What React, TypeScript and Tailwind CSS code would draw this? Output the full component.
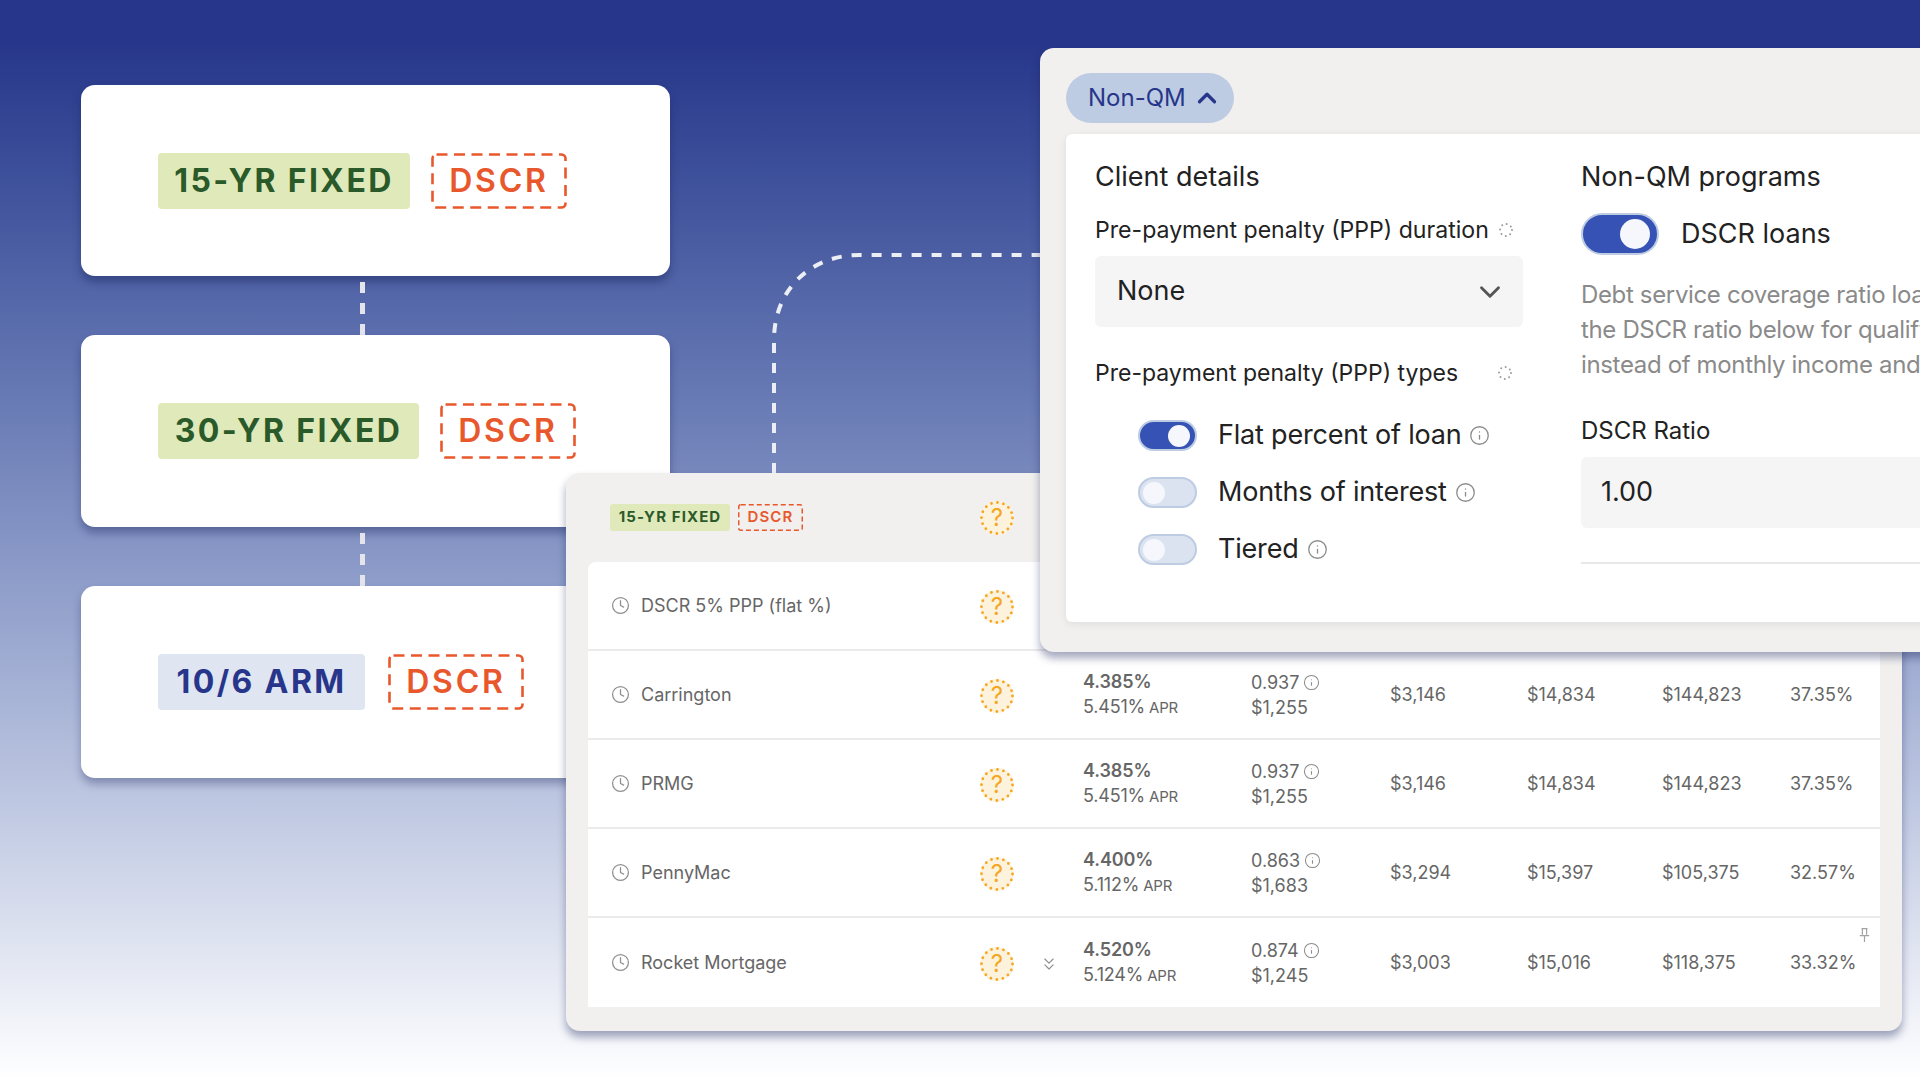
import React from "react";
import { ChevronDown, ChevronUp, ChevronsDown, Clock, Info } from "lucide-react";

const HelpBadge = () => (
  <div className="relative flex h-[34px] w-[34px] shrink-0 items-center justify-center rounded-full bg-[#fdf3dc] text-[24px] text-[#f5a623]">
    <svg className="absolute inset-0" viewBox="0 0 34 34" fill="none">
      <circle cx="17" cy="17" r="15.5" stroke="#f5a623" strokeWidth="2.8" strokeLinecap="round" strokeDasharray="0 6.09" />
    </svg>
    <span className="relative">?</span>
  </div>
);

const Spinner = () => (
  <svg className="h-[16px] w-[16px]" viewBox="0 0 16 16" fill="none">
    <circle cx="8" cy="8" r="6" stroke="#9a9a9a" strokeWidth="2" strokeLinecap="round" strokeDasharray="0 4.71" />
  </svg>
);

const PinIcon = () => (
  <svg className="absolute right-[10px] top-[10px] h-[14px] w-[11px] text-[#a3a3a3]" viewBox="0 0 11 14" fill="none" stroke="currentColor" strokeWidth="1.2">
    <path d="M2.5 .6h6M3.4 .6v6.2M7.6 .6v6.2M.8 7.6h9.4M5.5 7.6V14" />
  </svg>
);

const Toggle = ({ on, big }: { on?: boolean; big?: boolean }) => {
  if (big) {
    return (
      <div className="flex h-[42px] w-[78px] items-center justify-end rounded-full border-2 border-[#bdcce3] bg-[#3652b4] pr-[7px]">
        <div className="h-[30px] w-[30px] rounded-full bg-[#f5f7fc]" />
      </div>
    );
  }
  return (
    <div
      className={
        on
          ? "flex h-[31px] w-[59px] items-center justify-end rounded-full border-2 border-[#bdcce3] bg-[#3652b4] pr-[5px]"
          : "flex h-[31px] w-[59px] items-center justify-start rounded-full border-2 border-[#bdcce3] bg-[#dbe3f0] pl-[3px]"
      }
    >
      <div className="h-[22px] w-[22px] rounded-full bg-[#f5f7fc]" />
    </div>
  );
};

const DashedTag = ({ small }: { small?: boolean }) =>
  small ? (
    <div className="relative flex h-[27px] w-[65px] items-center justify-center text-[15px] font-semibold tracking-[1.2px] text-[#e8582c]">
      <svg className="absolute inset-0" width="65" height="27" fill="none">
        <rect x=".75" y=".75" width="63.5" height="25.5" rx="2" stroke="#e8582c" strokeWidth="1.5" strokeDasharray="5 3" />
      </svg>
      DSCR
    </div>
  ) : (
    <div className="relative flex h-[56px] w-[136px] items-center justify-center text-[32px] font-semibold tracking-[2.8px] text-[#e8582c]">
      <svg className="absolute inset-0" width="136" height="56" fill="none">
        <rect x="1.5" y="1.5" width="133" height="53" rx="4" stroke="#e8582c" strokeWidth="2.6" strokeDasharray="11 6.5" />
      </svg>
      DSCR
    </div>
  );

const BigTags = ({ label, tagClass, gap }: { label: string; tagClass: string; gap: string }) => (
  <div className={`flex items-center ${gap}`}>
    <div className={`flex h-[56px] items-center justify-center rounded-[4px] text-[32px] font-bold tracking-[2.4px] ${tagClass}`}>
      {label}
    </div>
    <DashedTag />
  </div>
);

const Connector = () => (
  <div className="flex h-[59px] items-start pl-[279px] pt-[6px]">
    <div className="h-full w-[5px] bg-[repeating-linear-gradient(to_bottom,#e3e4ec_0,#e3e4ec_11px,transparent_11px,transparent_21px)]" />
  </div>
);

const rows = [
  { name: "Carrington", rate: "4.385%", apr: "5.451%", pts: "0.937", cost: "$1,255", a: "$3,146", b: "$14,834", c: "$144,823", d: "37.35%" },
  { name: "PRMG", rate: "4.385%", apr: "5.451%", pts: "0.937", cost: "$1,255", a: "$3,146", b: "$14,834", c: "$144,823", d: "37.35%" },
  { name: "PennyMac", rate: "4.400%", apr: "5.112%", pts: "0.863", cost: "$1,683", a: "$3,294", b: "$15,397", c: "$105,375", d: "32.57%" },
  { name: "Rocket Mortgage", rate: "4.520%", apr: "5.124%", pts: "0.874", cost: "$1,245", a: "$3,003", b: "$15,016", c: "$118,375", d: "33.32%", last: true },
];

const NameCell = ({ name }: { name: string }) => (
  <div className="flex items-center gap-[11px] pl-[23px]">
    <Clock className="h-[19px] w-[19px] text-[#8f8f8f]" strokeWidth={1.6} />
    <span>{name}</span>
  </div>
);

const Toggled = ({ on, label }: { on?: boolean; label: string }) => (
  <div className="flex h-[31px] items-center">
    <Toggle on={on} />
    <span className="ml-[21px] text-[27px] tracking-[-0.2px] text-[#222]">{label}</span>
    <Info className="ml-[8px] h-[21px] w-[21px] text-[#8c8c8c]" strokeWidth={1.5} />
  </div>
);

export default function App() {
  return (
    <div className="relative h-[1080px] w-[1920px] overflow-hidden bg-gradient-to-b from-[#27368a] from-[4%] to-white font-['Inter',sans-serif]">
      {/* Stacked product cards */}
      <div className="absolute left-[81px] top-[85px] flex w-[589px] flex-col">
        <div className="flex h-[191px] items-center rounded-[14px] bg-white pl-[77px] shadow-[0_6px_8px_rgba(25,35,90,0.45)]">
          <BigTags label="15-YR FIXED" tagClass="w-[252px] bg-[#e0e9ba] text-[#2a5a2a]" gap="gap-[21px]" />
        </div>
        <Connector />
        <div className="flex h-[192px] items-center rounded-[14px] bg-white pl-[77px] shadow-[0_6px_8px_rgba(25,35,90,0.4)]">
          <BigTags label="30-YR FIXED" tagClass="w-[261px] bg-[#e0e9ba] text-[#2a5a2a]" gap="gap-[21px]" />
        </div>
        <Connector />
        <div className="flex h-[192px] items-center rounded-[14px] bg-white pl-[77px] shadow-[0_6px_8px_rgba(25,35,90,0.35)]">
          <BigTags label="10/6 ARM" tagClass="w-[207px] bg-[#dfe5f1] text-[#27368a]" gap="gap-[23px]" />
        </div>
      </div>

      {/* Dashed link between the panels */}
      <svg className="absolute left-[770px] top-[250px]" width="280" height="225" fill="none">
        <path d="M4 223V90C4 40 40 5 90 5H275" stroke="#eceef5" strokeWidth="4" strokeDasharray="10 10" />
      </svg>

      {/* Pricing table */}
      <div className="absolute left-[566px] top-[473px] flex h-[558px] w-[1336px] flex-col rounded-[14px] bg-[#f1f0ee] px-[22px] shadow-[0_6px_8px_rgba(25,35,90,0.4)]">
        <div className="flex h-[89px] shrink-0 items-center">
          <div className="ml-[22px] flex w-[370px] items-center gap-[8px]">
            <div className="flex h-[27px] w-[120px] items-center justify-center rounded-[3px] bg-[#e0e9ba] text-[15px] font-bold tracking-[1.1px] text-[#2a5a2a]">
              15-YR FIXED
            </div>
            <DashedTag small />
          </div>
          <HelpBadge />
        </div>
        <div className="h-[445px] w-[1292px] overflow-hidden rounded-t-[8px] bg-white text-[18px] text-[#666]">
          <div className="grid h-[89px] grid-cols-[392px_1fr] items-center border-b-2 border-[#ebebeb]">
            <NameCell name="DSCR 5% PPP (flat %)" />
            <div className="mt-[2px]">
              <HelpBadge />
            </div>
          </div>
          {rows.map((r) => (
            <div
              key={r.name}
              className={
                r.last
                  ? "relative grid h-[89px] grid-cols-[392px_103px_168px_139px_137px_135px_129px_1fr] items-center"
                  : "relative grid h-[89px] grid-cols-[392px_103px_168px_139px_137px_135px_129px_1fr] items-center border-b-2 border-[#ebebeb]"
              }
            >
              <NameCell name={r.name} />
              <div className="mt-[2px] flex items-center gap-[25px]">
                <HelpBadge />
                {r.last && <ChevronsDown className="h-[20px] w-[20px] text-[#8c8c8c]" strokeWidth={1.3} />}
              </div>
              <div className="leading-[25px]">
                <div className="font-semibold tracking-[-0.1px]">{r.rate}</div>
                <div className="tracking-[-0.2px]">
                  {r.apr}
                  <span className="ml-[4px] text-[15px]">APR</span>
                </div>
              </div>
              <div className="leading-[25px]">
                <div className="flex items-center gap-[4px]">
                  {r.pts}
                  <Info className="h-[17px] w-[17px] text-[#8c8c8c]" strokeWidth={1.5} />
                </div>
                <div>{r.cost}</div>
              </div>
              <div>{r.a}</div>
              <div>{r.b}</div>
              <div>{r.c}</div>
              <div className="-ml-px">{r.d}</div>
              {r.last && <PinIcon />}
            </div>
          ))}
        </div>
      </div>

      {/* Non-QM settings panel */}
      <div className="absolute left-[1040px] top-[48px] flex h-[604px] w-[900px] flex-col rounded-[14px] bg-[#f1f0ee] pl-[26px] pt-[25px] shadow-[0_6px_8px_rgba(25,35,90,0.4)]">
        <div className="flex h-[50px] w-[168px] items-center gap-[6px] rounded-full bg-[#bdcce3] pl-[22px] text-[24px] text-[#27368a]">
          Non-QM
          <ChevronUp className="h-[30px] w-[30px]" strokeWidth={2.6} />
        </div>
        <div className="mt-[11px] flex h-[488px] rounded-[6px] bg-white pl-[29px] shadow-[0_2px_8px_rgba(0,0,0,0.08)]">
          <div className="w-[428px] shrink-0">
            <h2 className="mt-[26px] text-[27px] leading-[34px] text-[#222]">Client details</h2>
            <div className="mt-[20px] flex h-[32px] items-center gap-[9px] text-[23.1px] text-[#222]">
              Pre-payment penalty (PPP) duration
              <Spinner />
            </div>
            <div className="mt-[10px] flex h-[71px] items-center justify-between rounded-[6px] bg-[#f5f5f5] pl-[22px] pr-[16px] text-[27px] text-[#222]">
              None
              <ChevronDown className="h-[34px] w-[34px] text-[#555]" strokeWidth={2} />
            </div>
            <div className="mt-[30px] flex h-[32px] items-center justify-between pr-[10px] text-[23px] text-[#222]">
              Pre-payment penalty (PPP) types
              <Spinner />
            </div>
            <div className="ml-[43px] mt-[31px] flex flex-col gap-[26px]">
              <Toggled on label="Flat percent of loan" />
              <Toggled label="Months of interest" />
              <Toggled label="Tiered" />
            </div>
          </div>
          <div className="ml-[59px] w-[400px] shrink-0 -translate-x-px">
            <h2 className="mt-[26px] whitespace-nowrap text-[27px] leading-[34px] text-[#222]">Non-QM programs</h2>
            <div className="mt-[19px] flex items-center gap-[22px] text-[27px] text-[#222]">
              <Toggle on big />
              DSCR loans
            </div>
            <p className="mt-[22px] whitespace-nowrap text-[24px] leading-[35px] tracking-[-0.35px] text-[#8a8a8a]">
              Debt service coverage ratio loans use
              <br />
              the DSCR ratio below for qualifying
              <br />
              instead of monthly income and
            </p>
            <div className="mt-[33px] text-[24px] leading-[32px] text-[#222]">DSCR Ratio</div>
            <div className="mt-[10px] flex h-[71px] items-center rounded-[6px] bg-[#f5f5f5] pl-[20px] text-[27px] text-[#222]">1.00</div>
            <div className="mt-[34px] h-[2px] bg-[#e8e8e8]" />
          </div>
        </div>
      </div>
    </div>
  );
}
